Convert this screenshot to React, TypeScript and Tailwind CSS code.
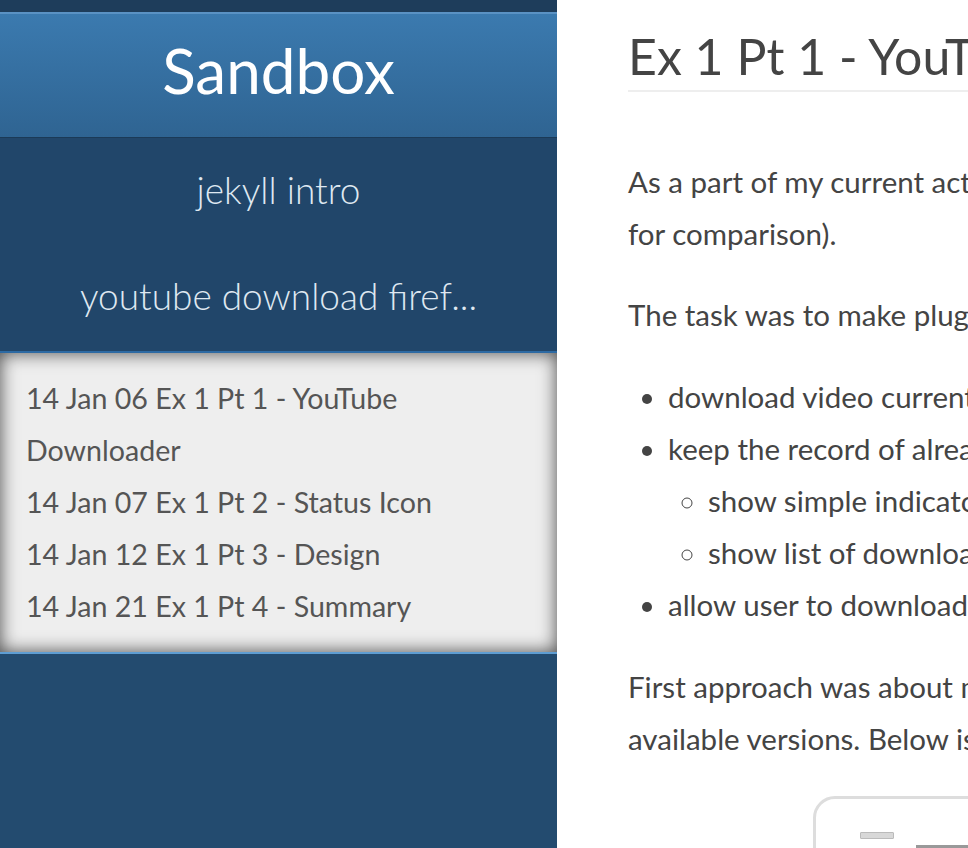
const navLinks = ['jekyll intro', 'youtube download firef...']

const posts = [
  ['14 Jan 06 Ex 1 Pt 1 - YouTube', 'Downloader'],
  ['14 Jan 07 Ex 1 Pt 2 - Status Icon'],
  ['14 Jan 12 Ex 1 Pt 3 - Design'],
  ['14 Jan 21 Ex 1 Pt 4 - Summary'],
]

const lato = { fontFamily: 'Lato, "Liberation Sans", sans-serif' }

export default function App() {
  return (
    <div className="flex h-screen w-full overflow-hidden bg-white" style={lato}>
      {/* Sidebar */}
      <aside className="flex w-[557px] shrink-0 flex-col bg-[#234b6f]">
        <div className="h-[12px] bg-[#1e3d5b]" />
        <header className="flex h-[125px] items-center justify-center border-t-2 border-[#5a92c4] bg-gradient-to-b from-[#3b7aaf] to-[#2f6492] pb-[12px]">
          <h1 className="text-[62px] font-normal leading-none text-white">Sandbox</h1>
        </header>
        <nav className="flex flex-col border-t border-[#1b3a57] bg-[#21466a] pb-[1px]">
          {navLinks.map(link => (
            <a
              key={link}
              className="flex h-[106px] items-center justify-center pb-[2px] text-[37px] font-light text-[#dfe8f1]"
            >
              {link}
            </a>
          ))}
        </nav>
        <div className="h-[2px] bg-[#2d6aa3]" />
        <ul
          className="bg-[#eeeeee] px-[26px] pt-[19px] pb-[20px] text-[28.6px] leading-[52px] text-[#555] shadow-[inset_0_0_18px_rgba(0,0,0,0.7)]"
        >
          {posts.map((lines, i) => (
            <li key={i}>
              {lines.map(l => (
                <div key={l} className="whitespace-nowrap">{l}</div>
              ))}
            </li>
          ))}
        </ul>
        <div className="h-[2px] bg-[#5e9dd2]" />
        <div className="flex-1" />
      </aside>

      {/* Main content */}
      <main className="w-[1200px] shrink-0 pl-[71px] pt-[26px] text-[29.5px] leading-[52px] text-[#444]">
        <h1 className="whitespace-nowrap border-b-2 border-[#eeeeee] pb-[4px] text-[50px] font-normal leading-[60px]">
          Ex 1 Pt 1 - YouTube Downloader
        </h1>
        <div className="mt-[64px]">
          <p className="whitespace-nowrap">As a part of my current activity I had to write a Firefox plugin (and Chrome</p>
          <p className="whitespace-nowrap">for comparison).</p>
        </div>
        <p className="mt-[29px] whitespace-nowrap">The task was to make plugin that would:</p>
        <ul className="mt-[30px] list-disc pl-[40px]">
          <li className="whitespace-nowrap">download video currently opened on YouTube</li>
          <li>
            <span className="whitespace-nowrap">keep the record of already downloaded videos</span>
            <ul className="list-[circle] pl-[40px]">
              <li className="whitespace-nowrap">show simple indicator on video page</li>
              <li className="whitespace-nowrap">show list of downloaded videos</li>
            </ul>
          </li>
          <li className="whitespace-nowrap">allow user to download video in selected quality</li>
        </ul>
        <div className="mt-[30px]">
          <p className="whitespace-nowrap">First approach was about making a simple button with list of</p>
          <p className="whitespace-nowrap">available versions. Below is the first sketch:</p>
        </div>
        {/* sketch image */}
        <div className="ml-[185px] mt-[31px] h-[200px] w-[420px] rounded-[22px] border-[3px] border-[#dddddd] bg-white pl-[44px] pt-[33px]">
          <div className="h-[7px] w-[34px] rounded-[1px] border border-[#bbb] bg-[#d8d8d8]" />
          <div className="ml-[56px] mt-[6px] h-[10px] w-[60px] bg-[#999]" />
        </div>
      </main>
    </div>
  )
}
